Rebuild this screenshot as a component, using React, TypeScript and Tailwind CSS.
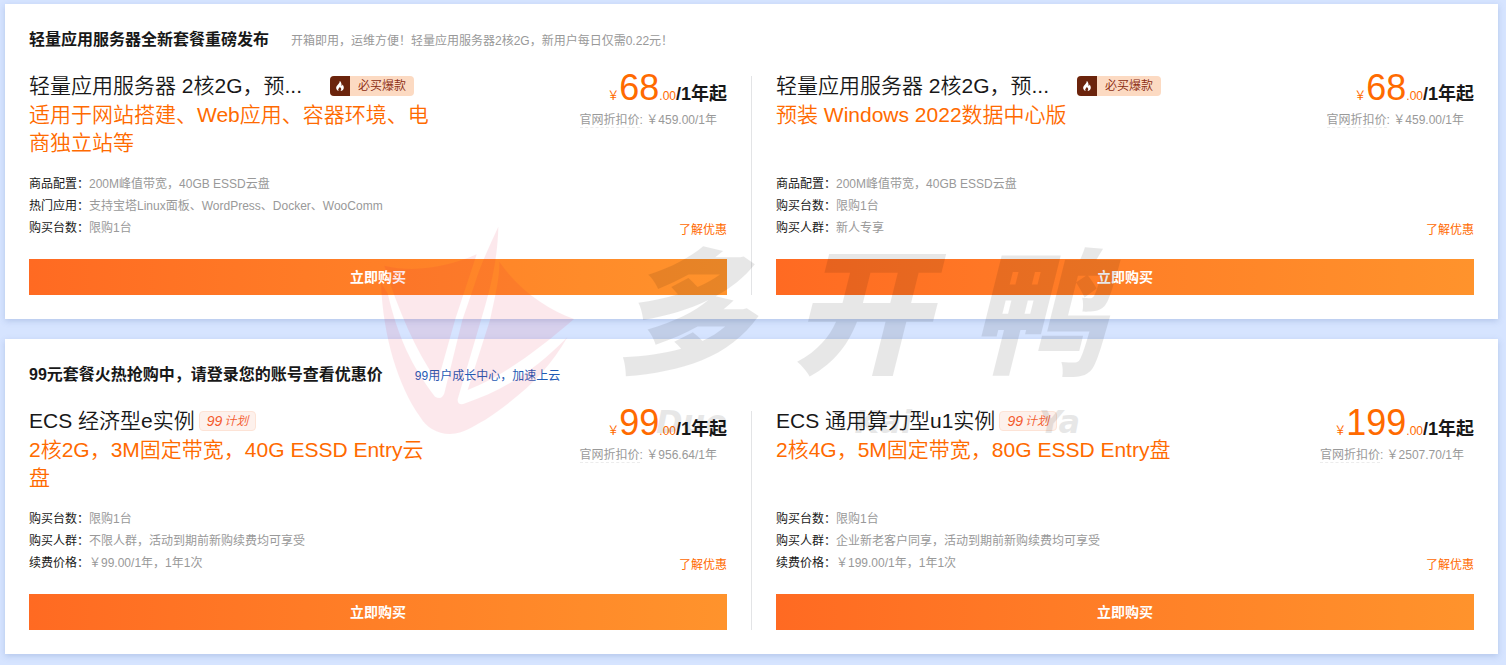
import React from 'react';

type Row = { label: string; value: string };
type Offer = {
  title: string;
  subtitle: string;
  badge: 'hot' | 'plan';
  price: string;
  original: string;
  rows: Row[];
};

const lightServers: Offer[] = [
  {
    title: '轻量应用服务器 2核2G，预...',
    subtitle: '适用于网站搭建、Web应用、容器环境、电商独立站等',
    badge: 'hot',
    price: '68',
    original: '459.00',
    rows: [
      { label: '商品配置：', value: '200M峰值带宽，40GB ESSD云盘' },
      { label: '热门应用：', value: '支持宝塔Linux面板、WordPress、Docker、WooComm' },
      { label: '购买台数：', value: '限购1台' },
    ],
  },
  {
    title: '轻量应用服务器 2核2G，预...',
    subtitle: '预装 Windows 2022数据中心版',
    badge: 'hot',
    price: '68',
    original: '459.00',
    rows: [
      { label: '商品配置：', value: '200M峰值带宽，40GB ESSD云盘' },
      { label: '购买台数：', value: '限购1台' },
      { label: '购买人群：', value: '新人专享' },
    ],
  },
];

const ecsServers: Offer[] = [
  {
    title: 'ECS 经济型e实例',
    subtitle: '2核2G，3M固定带宽，40G ESSD Entry云盘',
    badge: 'plan',
    price: '99',
    original: '956.64',
    rows: [
      { label: '购买台数：', value: '限购1台' },
      { label: '购买人群：', value: '不限人群，活动到期前新购续费均可享受' },
      { label: '续费价格：', value: '￥99.00/1年，1年1次' },
    ],
  },
  {
    title: 'ECS 通用算力型u1实例',
    subtitle: '2核4G，5M固定带宽，80G ESSD Entry盘',
    badge: 'plan',
    price: '199',
    original: '2507.70',
    rows: [
      { label: '购买台数：', value: '限购1台' },
      { label: '购买人群：', value: '企业新老客户同享，活动到期前新购续费均可享受' },
      { label: '续费价格：', value: '￥199.00/1年，1年1次' },
    ],
  },
];

function HotBadge() {
  return (
    <span className="ml-7 flex h-5 shrink-0 overflow-hidden rounded bg-[#fcdac2] text-xs leading-5 font-medium text-[#8a2a10]">
      <span className="flex w-5 items-center justify-center bg-[#6b240c]">
        <svg viewBox="0 0 10 12" className="h-3 w-[10px]" aria-hidden="true">
          <path
            d="M4.700.8C5 2.700 3.800 3.600 2.600 5 1.700 6 1 7 1.200 8.300c.2 1.400 1.300 2.400 2.600 2.800-.6-.6-.8-1.500-.3-2.300.4-.6 1-1 1.200-1.900.9.6 1.500 1.300 1.500 2.300 0 .7-.3 1.400-.8 1.900C7.500 10.800 8.800 9.500 8.800 7.700c0-1.300-.6-2.300-1.300-3.100-.1.700-.4 1.200-.9 1.500C6.700 3.900 6.200 2 4.700.8z"
            fill="#fff"
          />
        </svg>
      </span>
      <span className="px-2">必买爆款</span>
    </span>
  );
}

function PlanBadge() {
  return (
    <span className="ml-1 flex h-5 shrink-0 items-center gap-0.5 rounded border border-[#fde3d6] bg-[#fdf1ec] px-[7px] font-medium text-[#f4592b] italic">
      <span className="text-sm leading-4">99</span>
      <span className="text-xs leading-4">计划</span>
    </span>
  );
}

function OfferCard({ offer }: { offer: Offer }) {
  return (
    <article className="flex min-w-0 flex-1 flex-col">
      <div className="flex h-[97px] justify-between">
        <div className="w-[404px] font-['Liberation_Sans','Noto_Sans_CJK_SC_DemiLight','Noto_Sans_CJK_SC',sans-serif] text-[21px] leading-7">
          <div className="flex h-[25px] items-start">
            <h3 className="leading-5 whitespace-nowrap text-[#181818]">{offer.title}</h3>
            {offer.badge === 'hot' ? <HotBadge /> : <PlanBadge />}
          </div>
          <p className="text-[#ff6a00]">{offer.subtitle}</p>
        </div>
        <div className="text-right">
          <p className="flex h-8 items-baseline justify-end text-xs leading-6 text-[#ff6a00]">
            <span>￥</span>
            <span className="text-4xl leading-6">{offer.price}</span>
            <span>.00</span>
            <span className="text-lg leading-6 font-bold text-[#181818]">/1年起</span>
          </p>
          <p className="pr-2.5 text-xs leading-6 text-[#999]">
            <span className="border-b border-dashed border-[#ececec]">官网折扣价</span>: ￥{offer.original}/1年
          </p>
        </div>
      </div>
      <div className="flex items-end justify-between text-xs">
        <dl className="leading-[22px]">
          {offer.rows.map((row) => (
            <div key={row.label} className="flex">
              <dt className="text-[#181818]">{row.label}</dt>
              <dd className="text-[#999]">{row.value}</dd>
            </div>
          ))}
        </dl>
        <a href="#detail" className="leading-[18px] text-[#ff6a00]">
          了解优惠
        </a>
      </div>
      <button
        type="button"
        className="mt-5 h-9 w-full bg-linear-to-r from-[#ff6a22] to-[#ff932c] text-sm font-bold text-white"
      >
        立即购买
      </button>
    </article>
  );
}

function Section({ heading, note, offers }: { heading: string; note: React.ReactNode; offers: Offer[] }) {
  return (
    <section className="bg-white px-6 pt-6 pb-6 shadow-[0_2px_6px_rgba(80,110,170,0.25)]">
      <header className="flex h-12 items-start">
        <h2 className="text-base leading-6 font-bold text-[#181818]">{heading}</h2>
        {note}
      </header>
      <div className="flex">
        <OfferCard offer={offers[0]} />
        <div className="mx-6 w-px bg-[#e3e4e6]" />
        <OfferCard offer={offers[1]} />
      </div>
    </section>
  );
}

function Watermark() {
  return (
    <div className="pointer-events-none absolute top-[224px] left-[380px] flex items-start gap-9 opacity-9 select-none">
      <svg viewBox="15 12 600 642" className="h-[214px] w-[200px]" aria-hidden="true">
        <g fill="#e6143c">
          <path d="M370 20C345 75 318 130 300 190L262 300 208 520Q200 542 180 530C110 440 68 350 38 220L18 190C24 350 70 500 135 590Q165 640 225 642C270 640 290 620 330 600C450 520 520 450 577 352C480 450 390 510 265 552Q247 555 248 538L318 300C355 180 368 100 370 20Z" />
          <path d="M28 137C120 160 220 140 305 103L240 300 188 485C120 390 70 270 28 137Z" />
          <path d="M373 125C430 210 520 270 597 297C500 380 400 460 278 510L345 300C360 230 375 170 373 125Z" />
        </g>
      </svg>
      <div className="pt-3 text-black italic">
        <div className="flex gap-10 font-['Noto_Sans_CJK_SC',sans-serif] text-[136px] leading-[136px] font-black">
          <span>多</span>
          <span>开</span>
          <span>鸭</span>
        </div>
        <div className="flex justify-between pt-8 pr-6 pl-10 font-['DejaVu_Sans',sans-serif] text-[32px] leading-9 font-bold">
          <span>Duo</span>
          <span>Kai</span>
          <span>Ya</span>
        </div>
      </div>
    </div>
  );
}

export default function App() {
  return (
    <main className="relative flex min-h-screen flex-col gap-5 bg-[#d6e4ff] pt-1 pr-2 pb-2 pl-[5px] font-['Liberation_Sans','Noto_Sans_CJK_SC',sans-serif]">
      <Section
        heading="轻量应用服务器全新套餐重磅发布"
        note={<p className="ml-[22px] text-xs leading-[26px] text-[#999]">开箱即用，运维方便！轻量应用服务器2核2G，新用户每日仅需0.22元！</p>}
        offers={lightServers}
      />
      <Section
        heading="99元套餐火热抢购中，请登录您的账号查看优惠价"
        note={<a href="#growth" className="ml-8 text-xs leading-[26px] text-[#1f5bb5]">99用户成长中心，加速上云</a>}
        offers={ecsServers}
      />
      <Watermark />
    </main>
  );
}
